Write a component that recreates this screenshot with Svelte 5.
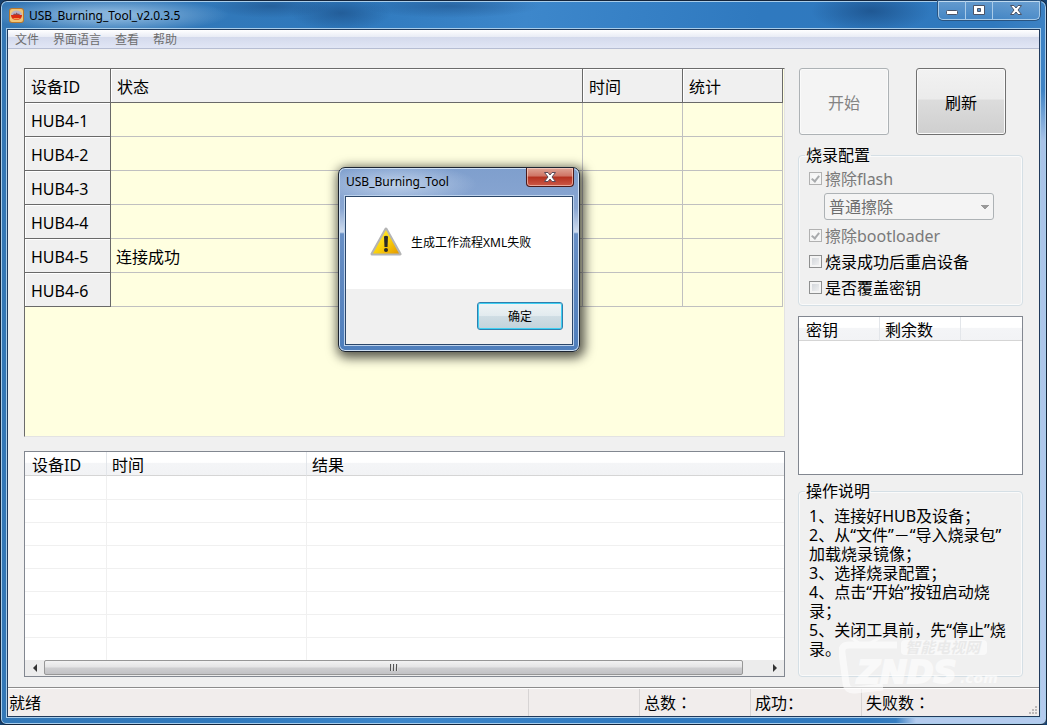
<script lang="ts">
  const menus = ['文件', '界面语言', '查看', '帮助'];
  const hubs = [
    { id: 'HUB4-1', status: '' },
    { id: 'HUB4-2', status: '' },
    { id: 'HUB4-3', status: '' },
    { id: 'HUB4-4', status: '' },
    { id: 'HUB4-5', status: '连接成功' },
    { id: 'HUB4-6', status: '' }
  ];
  const logRows = Array(8).fill(null);
  const steps = [
    '1、连接好HUB及设备；',
    '2、从“文件”－“导入烧录包”\n加载烧录镜像；',
    '3、选择烧录配置；',
    '4、点击“开始”按钮启动烧录；',
    '5、关闭工具前，先“停止”烧录。'
  ];

  let eraseFlash = $state(true);
  let eraseBootloader = $state(true);
  let reboot = $state(false);
  let overwriteKey = $state(false);
  let dialogOpen = $state(true);
</script>

{#snippet cross(stroke: string)}
  <svg width="14" height="14" viewBox="0 0 14 14">
    <path d="M1.5 2.5H5L7 5l2-2.5h3.5L9 7l3.5 4.5H9L7 9l-2 2.5H1.5L5 7z" fill="#fff" {stroke} />
  </svg>
{/snippet}

<div class="window">
  <header class="titlebar">
    <svg class="app-icon" width="15" height="15" viewBox="0 0 15 15" aria-hidden="true">
      <rect x="0" y="0" width="15" height="15" rx="3" fill="#b9772c" />
      <rect x="1" y="1" width="13" height="13" rx="2" fill="#f0c578" />
      <ellipse cx="7.5" cy="7" rx="5.5" ry="4.5" fill="#b8b2c4" />
      <path d="M2 7h11c0 3-2.5 5-5.5 5S2 10 2 7z" fill="#dc2a10" />
      <path d="M4 7l1-1.5 1.5.5 1-1.5L9 6l1-.5L11 7z" fill="#8f4a50" />
      <path d="M4 10h7l-1.5 1.5h-4z" fill="#f59a4a" />
    </svg>
    <h1>USB_Burning_Tool_v2.0.3.5</h1>
    <div class="caption">
      <button aria-label="最小化">
        <svg width="14" height="14" viewBox="0 0 14 14"><rect x="1.5" y="7.5" width="11" height="4" rx="1" fill="#fff" stroke="#4b5468" /></svg>
      </button>
      <button aria-label="最大化">
        <svg width="14" height="14" viewBox="0 0 14 14"><path d="M1.5 2.5h11v9h-11zM5.5 5.5v3h3v-3z" fill="#fff" stroke="#4b5468" fill-rule="evenodd" /></svg>
      </button>
      <button class="wide" aria-label="关闭">
        {@render cross('#4b5468')}
      </button>
    </div>
  </header>

  <div class="client">
    <nav>
      {#each menus as menu}
        <button>{menu}</button>
      {/each}
    </nav>

    <main>
      <div class="left">
        <div class="grid">
          <table>
            <thead>
              <tr>
                <th class="c-id">设备ID</th>
                <th>状态</th>
                <th class="c-num">时间</th>
                <th class="c-num">统计</th>
              </tr>
            </thead>
            <tbody>
              {#each hubs as hub}
                <tr>
                  <th>{hub.id}</th>
                  <td>{hub.status}</td>
                  <td></td>
                  <td></td>
                </tr>
              {/each}
            </tbody>
          </table>
        </div>

        <div class="list">
          <table>
            <thead>
              <tr>
                <th class="l-id">设备ID</th>
                <th class="l-time">时间</th>
                <th>结果</th>
              </tr>
            </thead>
            <tbody>
              {#each logRows as _}
                <tr><td></td><td></td><td></td></tr>
              {/each}
            </tbody>
          </table>
          <div class="scrollbar">
            <button class="arrow" aria-label="向左滚动">
              <svg width="4" height="8" viewBox="0 0 4 8"><path d="M4 0v8L0 4z" fill="#333" /></svg>
            </button>
            <div class="track">
              <div class="thumb"><i></i><i></i><i></i></div>
            </div>
            <button class="arrow" aria-label="向右滚动">
              <svg width="4" height="8" viewBox="0 0 4 8"><path d="M0 0v8l4-4z" fill="#333" /></svg>
            </button>
          </div>
        </div>
      </div>

      <aside>
        <div class="actions">
          <button class="big" disabled>开始</button>
          <button class="big">刷新</button>
        </div>

        <fieldset class="config">
          <legend>烧录配置</legend>
          <label class="off"><input type="checkbox" bind:checked={eraseFlash} disabled />擦除flash</label>
          <select aria-label="擦除flash" disabled>
            <option>普通擦除</option>
          </select>
          <label class="off"><input type="checkbox" bind:checked={eraseBootloader} disabled />擦除bootloader</label>
          <label><input type="checkbox" bind:checked={reboot} />烧录成功后重启设备</label>
          <label><input type="checkbox" bind:checked={overwriteKey} />是否覆盖密钥</label>
        </fieldset>

        <div class="list keys">
          <table>
            <thead>
              <tr>
                <th class="k-col">密钥</th>
                <th class="k-col">剩余数</th>
                <th></th>
              </tr>
            </thead>
          </table>
        </div>

        <fieldset class="help">
          <legend>操作说明</legend>
          {#each steps as step}
            <p>{step}</p>
          {/each}
        </fieldset>

        <svg class="watermark" width="164" height="58" viewBox="0 0 164 58" aria-hidden="true">
          <path d="M58 8H10Q2 8 3 16L7 46Q8 54 16 53L44 50" fill="none" stroke="#fff" stroke-width="7" />
          <path d="M22 8L12 0M28 8L42 0" fill="none" stroke="#fff" stroke-width="3" />
          <rect x="62" y="3" width="86" height="15" rx="4" fill="#fff" />
          <text class="wm-cn" x="66" y="16">智能电视网</text>
          <text class="wm-en" x="18" y="46">ZNDS</text>
          <text class="wm-com" x="121" y="46">.com</text>
        </svg>
      </aside>
    </main>

    <footer>
      <span class="ready">就绪</span>
      <span></span>
      <span class="count">总数：</span>
      <span>成功：</span>
      <span class="count last">失败数：</span>
      <svg class="grip" width="10" height="10" viewBox="0 0 10 10" aria-hidden="true">
        <path d="M7 1h2v2H7zM4 4h2v2H4zM7 4h2v2H7zM1 7h2v2H1zM4 7h2v2H4zM7 7h2v2H7z" fill="#bdb9b9" />
      </svg>
    </footer>
  </div>

  {#if dialogOpen}
    <div class="dialog" role="alertdialog" aria-labelledby="dlg-title" aria-describedby="dlg-text">
      <div class="dialog-bar">
        <h2 id="dlg-title">USB_Burning_Tool</h2>
        <button class="dialog-close" aria-label="关闭" onclick={() => (dialogOpen = false)}>
          {@render cross('#5b4a58')}
        </button>
      </div>
      <div class="dialog-body">
        <div class="message">
          <svg width="32" height="30" viewBox="0 0 32 30" aria-hidden="true">
            <defs>
              <linearGradient id="warn" x1="0" y1="0" x2="1" y2="1">
                <stop offset="0" stop-color="#fff04a" />
                <stop offset="0.5" stop-color="#fcd40c" />
                <stop offset="1" stop-color="#e59a00" />
              </linearGradient>
            </defs>
            <path d="M16 2L30 27H2z" fill="#d6d6d6" stroke="#b4b4b4" stroke-width="3" stroke-linejoin="round" />
            <path d="M16 3L29 26.5H3z" fill="url(#warn)" />
            <path d="M14 9.5q2-1.500 4 0L17.500 20h-3z" fill="#2a2a2a" />
            <circle cx="16" cy="23" r="2" fill="#2a2a2a" />
          </svg>
          <p id="dlg-text">生成工作流程XML失败</p>
        </div>
        <div class="buttons">
          <button class="ok" onclick={() => (dialogOpen = false)}>确定</button>
        </div>
      </div>
    </div>
  {/if}
</div>

<style>
  :global(body) {
    margin: 0;
    background: #16416f;
  }

  .window {
    position: relative;
    box-sizing: border-box;
    display: flex;
    flex-direction: column;
    min-height: 100vh;
    padding: 0 6px 7px 6px;
    border: 1px solid #14243a;
    border-radius: 7px 7px 6px 6px;
    background:
      radial-gradient(ellipse 120px 18px at 108px 14px, rgba(190, 220, 245, 0.6) 20%, transparent),
      radial-gradient(ellipse 60px 12px at 270px 5px, rgba(20, 60, 110, 0.4), transparent),
      radial-gradient(ellipse 50px 18px at 340px 12px, rgba(20, 60, 110, 0.45), transparent),
      radial-gradient(ellipse 90px 12px at 450px 5px, rgba(20, 60, 110, 0.4), transparent),
      radial-gradient(ellipse 60px 22px at 870px 10px, rgba(15, 55, 105, 0.5), transparent),
      linear-gradient(transparent 90px, #a9c3e8 140px, #b4cbee) right / 9px 100% no-repeat,
      linear-gradient(90deg, transparent, #b4cbee 20px) right bottom / 150px 9px no-repeat,
      linear-gradient(100deg, #3577b4 0, #2f79bd 30%, #3d87cb 45%, #2f79bf 65%, #3079be 85%, #5b97d2 100%);
    box-shadow: inset 0 0 0 1px #a9cdea;
    font-family: "Noto Sans", "Noto Sans CJK SC", sans-serif;
    font-size: 16px;
    color: #000;
  }

  button,
  select {
    font: inherit;
    color: inherit;
  }

  h1,
  h2,
  p {
    margin: 0;
    font-weight: 400;
  }

  .titlebar {
    display: flex;
    align-items: center;
    height: 28px;
    padding-left: 2px;
  }

  h1 {
    flex: 1;
    margin-left: 5px;
    font-size: 12px;
  }

  .caption {
    display: flex;
    align-self: flex-start;
    border: 1px solid #a9cbe8;
    border-top: 0;
    border-radius: 0 0 5px 5px;
    box-shadow: 0 0 0 1px #2a5480;
  }

  .caption button {
    display: flex;
    align-items: center;
    justify-content: center;
    width: 27px;
    height: 18px;
    padding: 0;
    border: 0;
    border-right: 1px solid #a9cbe8;
    background: linear-gradient(rgba(255, 255, 255, 0.25), rgba(255, 255, 255, 0.1));
  }

  .caption .wide {
    width: 46px;
    border-right: 0;
  }

  .client {
    flex: 1;
    display: flex;
    flex-direction: column;
    border: 1px solid #203a5c;
    outline: 1px solid #a9cdea;
    background: #f0f0f0;
  }

  nav {
    display: flex;
    height: 18px;
    border-bottom: 1px solid #b6bdd2;
    background: linear-gradient(#fff 0, #e9ecf5 38%, #d4daec 40%, #e1e6f5 100%);
  }

  nav button {
    padding: 1px 7px 0;
    border: 0;
    background: none;
    font-size: 12px;
    line-height: 18px;
    color: #6d6d6d;
  }

  main {
    flex: 1;
    display: flex;
    gap: 13px;
    padding: 19px 16px 10px;
  }

  .left {
    flex: 1;
    display: flex;
    flex-direction: column;
    gap: 14px;
  }

  table {
    width: 100%;
    border-collapse: separate;
    border-spacing: 0;
    table-layout: fixed;
  }

  th,
  td {
    box-sizing: border-box;
    padding: 2px 5px 0;
    text-align: left;
    font-weight: 400;
    line-height: 20px;
  }

  .grid {
    flex: 1;
    border: 1px solid #6b6b6b;
    border-right-color: #e3e3e3;
    border-bottom-color: #e3e3e3;
    padding-right: 1px;
    background: #ffffe0;
  }

  .grid th,
  .grid td {
    height: 34px;
    border-right: 1px solid #c0c0c0;
    border-bottom: 1px solid #c0c0c0;
  }

  .grid th {
    border-color: #696969;
    background: #f0f0f0;
    box-shadow: inset 1px 1px #fff;
    padding-left: 6px;
  }

  .c-id {
    width: 86px;
  }

  .c-num {
    width: 100px;
  }

  .list {
    border: 1px solid #828790;
    background: #fff;
  }

  .list th {
    height: 24px;
    padding-left: 7px;
    border-right: 1px solid #e3e6ea;
    border-bottom: 1px solid #d5d5d5;
    background: linear-gradient(#fff 45%, #f4f5f7 50%, #f2f3f5);
  }

  .list th:last-child,
  .list td:last-child {
    border-right: 0;
  }

  .list td {
    height: 23px;
    border-right: 1px solid #f0f0f0;
    border-bottom: 1px solid #f0f0f0;
  }

  .list tr:first-child td {
    height: 24px;
  }

  .list tr:last-child td {
    height: 22px;
    border-bottom: 0;
  }

  .l-id {
    width: 82px;
  }

  .l-time {
    width: 200px;
  }

  .list .l-time,
  .list .l-time + th,
  .list .k-col + .k-col {
    padding-left: 5px;
  }

  .scrollbar {
    display: flex;
    height: 16px;
    background: #ececec;
  }

  .arrow {
    display: flex;
    align-items: center;
    justify-content: center;
    width: 19px;
    padding: 0;
    border: 0;
    background: none;
  }

  .track {
    flex: 1;
  }

  .thumb {
    box-sizing: border-box;
    display: flex;
    align-items: center;
    justify-content: center;
    gap: 1px;
    width: 97%;
    height: 15px;
    border: 1px solid #979797;
    border-radius: 2px;
    background: linear-gradient(#f3f3f3, #e4e4e5 48%, #cfcfd1 52%, #c2c2c5);
  }

  .thumb i {
    width: 2px;
    height: 7px;
    background: linear-gradient(90deg, #555 50%, #ddd 50%);
  }

  aside {
    position: relative;
    z-index: 1;
    display: flex;
    flex-direction: column;
    width: 225px;
  }

  .actions {
    display: flex;
    gap: 27px;
    padding-left: 1px;
  }

  .big {
    width: 90px;
    height: 67px;
    border: 1px solid #707070;
    border-radius: 3px;
    background: linear-gradient(#f2f2f2, #ebebeb 46%, #dcdcdc 48%, #cfcfcf);
    box-shadow: inset 0 0 0 1px #fafafa;
  }

  .big:disabled {
    border-color: #adb2b5;
    background: #f4f4f4;
    color: #838383;
  }

  fieldset {
    min-width: 0;
    margin: 0;
    border: 1px solid #d5dfe5;
    border-radius: 4px;
    box-shadow: inset 0 0 0 1px #fafafa;
  }

  legend {
    margin-left: -4px;
    padding: 0 1px;
    line-height: 20px;
  }

  .config {
    display: flex;
    flex-direction: column;
    margin-top: 10px;
    padding: 0 10px 5px;
  }

  label {
    display: flex;
    align-items: center;
    gap: 3px;
    height: 26px;
    white-space: nowrap;
  }

  .off {
    color: #7a7a7a;
  }

  input {
    appearance: none;
    flex: none;
    box-sizing: border-box;
    width: 13px;
    height: 13px;
    margin: 0;
    border: 1px solid #8e8f8f;
    background: linear-gradient(135deg, #cbcfd5, #f6f6f6);
    box-shadow: inset 0 0 0 2px #f4f4f4;
  }

  input:disabled {
    border-color: #b1b1b1;
    background: #f8f8f8;
  }

  input:checked::after {
    content: "";
    display: block;
    width: 3px;
    height: 6px;
    margin: 1px 0 0 3px;
    border: solid #a9abad;
    border-width: 0 2px 2px 0;
    transform: rotate(38deg);
  }

  select {
    appearance: none;
    width: 170px;
    height: 27px;
    margin: 2px 0 2px 15px;
    padding: 0 4px;
    border: 1px solid #adb2b5;
    border-radius: 3px;
    background: conic-gradient(from -45deg at 50% 100%, #999 90deg, transparent 0) right 4px center / 8px 4px no-repeat #f4f4f4;
    color: #6d6d6d;
    opacity: 1;
  }

  .keys {
    height: 157px;
    margin-top: 10px;
  }

  .k-col {
    width: 81px;
  }

  .help {
    flex: 1;
    margin-top: 6px;
    padding: 6px 10px 8px;
  }

  .help p {
    width: 200px;
    line-height: 19px;
    white-space: pre-line;
  }

  .watermark {
    position: absolute;
    right: 20px;
    bottom: -18px;
    opacity: 0.6;
    pointer-events: none;
    font-style: italic;
    font-weight: 700;
  }

  .wm-cn {
    fill: #e6e6e6;
    font-size: 15px;
  }

  .wm-en {
    fill: #fff;
    stroke: #fff;
    stroke-width: 2px;
    font-family: "DejaVu Sans", sans-serif;
    font-size: 32px;
  }

  .wm-com {
    fill: #fff;
    font-family: "DejaVu Sans", sans-serif;
    font-size: 14px;
  }

  footer {
    position: relative;
    display: flex;
    height: 28px;
    border-top: 1px solid #8c8c8c;
    box-shadow: inset 0 1px #fff;
    background: #f1edec;
  }

  footer span {
    box-sizing: border-box;
    width: 111px;
    padding-left: 4px;
    border-left: 1px solid #d7d4d4;
    margin-top: 1px;
    line-height: 29px;
  }

  footer .ready {
    flex: 1;
    padding-left: 1px;
    border-left: 0;
  }

  footer .count {
    font-family: "Noto Sans", "Noto Sans CJK TC", sans-serif;
  }

  footer .last {
    width: 178px;
  }

  .grip {
    position: absolute;
    right: 1px;
    bottom: 1px;
  }

  .dialog {
    position: absolute;
    z-index: 2;
    top: 166px;
    left: 337px;
    box-sizing: border-box;
    width: 242px;
    padding: 0 7px 6px;
    border: 1px solid #1c2430;
    border-radius: 7px;
    background:
      radial-gradient(ellipse 80px 20px at 58px 16px, rgba(215, 228, 245, 0.7), transparent),
      linear-gradient(#7f9fcd, #89a6d2 22%, #cfdcee 35%, #6990c6 36%, #5f88c0 60%, #4e7ebc);
    box-shadow: inset 0 0 0 1px #cfe0f4, 2px 3px 11px 3px rgba(0, 0, 0, 0.65);
    font-size: 12px;
  }

  .dialog-bar {
    display: flex;
    justify-content: space-between;
    height: 28px;
  }

  h2 {
    font-size: 12px;
    line-height: 27px;
  }

  .dialog-close {
    display: flex;
    align-items: center;
    justify-content: center;
    width: 48px;
    height: 19px;
    margin-right: -2px;
    padding: 0;
    border: 1px solid #4a1a1a;
    border-top: 0;
    border-radius: 0 0 4px 4px;
    background: linear-gradient(#dfa596, #cf7364 45%, #b4301f 50%, #cc5a48);
    box-shadow: inset 0 0 0 1px rgba(255, 220, 210, 0.6);
  }

  .dialog-body {
    margin: 0 -1px;
    border: 1px solid #2b4669;
    outline: 1px solid #bcd2ec;
    background: #f0f0f0;
  }

  .message {
    box-sizing: border-box;
    display: flex;
    align-items: center;
    gap: 9px;
    height: 92px;
    padding: 0 0 2px 24px;
    background: #fff;
  }

  .buttons {
    display: flex;
    justify-content: flex-end;
    padding: 13px 9px 14px;
  }

  .ok {
    width: 86px;
    height: 28px;
    border: 1px solid #2f7fae;
    border-radius: 3px;
    background: linear-gradient(#f0f4f6, #e2ebef 48%, #cfdde4 52%, #c3d3db);
    box-shadow: inset 0 0 0 1px #3fd0f3;
  }
</style>
